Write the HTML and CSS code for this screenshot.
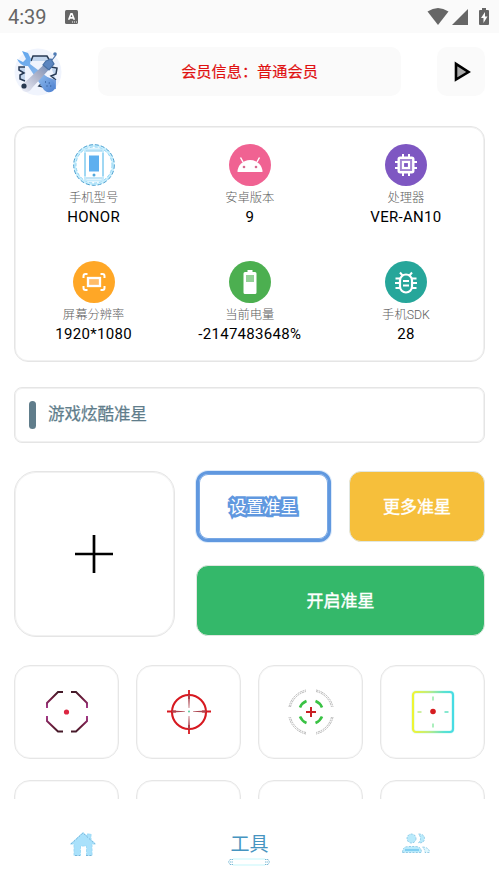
FILE: index.html
```html
<!DOCTYPE html>
<html lang="zh-CN">
<head>
<meta charset="utf-8">
<title>工具</title>
<link rel="stylesheet" href="styles.css">
</head>
<body>
<div class="status">
  <span class="time">4:39</span>
  <svg class="badge" width="13" height="14" viewBox="0 0 13 14"><rect width="13" height="14" rx="1.5" fill="#666"/><path d="M3.7 9.8 6 3.8h1l2.3 6M4.7 7.9h3.6" fill="none" stroke="#fff" stroke-width="1.6"/><path d="M7 12h1m1 0h1m1 0h1" stroke="#fff" stroke-width="1"/></svg>
  <svg class="signals" width="64" height="20" viewBox="0 0 64 20"><g fill="#666"><path d="M.5 4.5Q11 -2.5 21.500 4.500L11 18z"/><path d="M41 2v16H25z"/><path d="M55 3V1h4v2h2q1 0 1 1v13q0 1-1 1h-8q-1 0-1-1V4q0-1 1-1z"/></g><path d="M58 5l-4 6h2.500v5l4-6.500H58z" fill="#fff"/></svg>
</div>
<header class="header">
  <svg class="logo" width="50" height="50" viewBox="0 0 50 50">
    <defs><linearGradient id="handle" x1="0" y1="1" x2="1" y2="0"><stop stop-color="#eef0fa"/><stop offset=".55" stop-color="#a5abc3"/><stop offset="1" stop-color="#547eb8"/></linearGradient>
    <linearGradient id="spanner" x1="0" y1="0" x2="1" y2="1"><stop stop-color="#5ba4ee"/><stop offset=".6" stop-color="#89b6ea"/><stop offset="1" stop-color="#4c7fd0"/></linearGradient></defs>
    <circle cx="25" cy="25" r="23.500" fill="#f0f4fd"/>
    <path d="M12 34l-5-2v-4l4-2-5-3v-3h6M18 14l2-5h14l3 5M38 20l6 1-1 6-5 2 5 4M20 39h-3l2-4M31 40l-5-1 4-4" fill="#c3d6ee" stroke="#283a54" stroke-width="1.500"/>
    <path d="M31 29l12 4v9l-8 1-6-7z" fill="#719bda"/>
    <path d="M9 4l6 2 3 6-1 5 24 18q3 6-1 9-5 3-9-1L15 19q-7 1-11-7l6 3 3-3z" fill="url(#spanner)"/>
    <path d="M37 12l4 5-22 24q-2 4-6 4-6-1-4-7z" fill="url(#handle)"/>
    <path d="M33 14l5-2 3 5-5 6-6-5zM39 13l4-5" fill="#5c86c0" stroke="#4870a5" stroke-width="1.200"/>
    <circle cx="42" cy="7" r="1.800" fill="#4e7bb4"/><circle cx="11" cy="39" r="2.600" fill="#28384f"/>
    <path d="M32 35h.8m3 1h.8m-3 3h.8m3 0h.8" stroke="#29548f" stroke-width="1.500"/>
  </svg>
  <div class="member">会员信息：普通会员</div>
  <div class="play"><svg width="18" height="22" viewBox="0 0 18 22"><path d="M2 3v15.500L14.500 11z" fill="#aaa" stroke="#000" stroke-width="2.600"/></svg></div>
</header>
<main class="content">
  <section class="info">
    <div class="item">
      <svg class="icon" viewBox="0 0 42 42"><circle cx="21" cy="21" r="19.200" fill="none" stroke="#c8effd" stroke-width="2.500"/><circle cx="21" cy="21" r="20.300" fill="none" stroke="#4b9ed0" stroke-dasharray="4 2"/><circle cx="21" cy="21" r="18" fill="none" stroke="#6bc2ee" stroke-width=".7" stroke-dasharray="3 2"/><rect x="12" y="5.500" width="18" height="31" rx="2" fill="#fff" stroke="#c4eafb" stroke-width="2"/><path d="M13 7h16M13 34h16M12 9v23M30 9v23" stroke="#6abde8" stroke-width=".8"/><rect x="16" y="11.500" width="10" height="16" fill="#5eafef"/><circle cx="21" cy="31" r="1.500" fill="#52a8dc"/></svg>
      <span class="label">手机型号</span><span class="value">HONOR</span>
    </div>
    <div class="item">
      <svg class="icon" viewBox="0 0 42 42"><circle cx="21" cy="21" r="21" fill="#f06292"/><path d="M8.500 28a12.500 12 0 0 1 25 0z" fill="#fff"/><path d="M14 18 11.500 13.500M28 18l2.500-4.500" stroke="#fff" stroke-width="1.500"/><circle cx="15" cy="23" r="1.300" fill="#d76b91"/><circle cx="27" cy="23" r="1.300" fill="#d76b91"/></svg>
      <span class="label">安卓版本</span><span class="value">9</span>
    </div>
    <div class="item">
      <svg class="icon" viewBox="0 0 42 42"><circle cx="21" cy="21" r="21" fill="#7e57c2"/><rect x="13.700" y="13.700" width="14.600" height="14.600" rx="1.500" fill="#a386d2" stroke="#fff" stroke-width="2.400"/><path d="M18 10v3m6-3v3m-6 16v3m6-3v3M10 18h3m-3 6h3m16-6h3m-3 6h3" stroke="#fff" stroke-width="2"/><rect x="18" y="18" width="6" height="6" fill="#7e57c2" stroke="#fff" stroke-width="2.200"/></svg>
      <span class="label">处理器</span><span class="value">VER-AN10</span>
    </div>
    <div class="item">
      <svg class="icon" viewBox="0 0 42 42"><circle cx="21" cy="21" r="21" fill="#ffa726"/><path d="M10.500 17v-2q0-2 2-2h2M27.500 13h2q2 0 2 2v2M31.500 25v2q0 2-2 2h-2M14.500 29h-2q-2 0-2-2v-2" fill="none" stroke="#fff" stroke-width="2"/><rect x="15" y="17" width="12" height="8" fill="#ffbc68" stroke="#fff" stroke-width="2.300"/></svg>
      <span class="label">屏幕分辨率</span><span class="value">1920*1080</span>
    </div>
    <div class="item">
      <svg class="icon" viewBox="0 0 42 42"><circle cx="21" cy="21" r="21" fill="#4caf50"/><path d="M18.500 11V9h5v2H26q1.500 0 1.500 1.500v19Q27.500 33 26 33H16q-1.500 0-1.500-1.500v-19Q14.500 11 16 11z" fill="#fff"/><path d="M17 14h8v7h-8z" fill="#94d197"/></svg>
      <span class="label">当前电量</span><span class="value">-2147483648%</span>
    </div>
    <div class="item">
      <svg class="icon" viewBox="0 0 42 42"><circle cx="21" cy="21" r="21" fill="#26a69a"/><rect x="15" y="13.500" width="12" height="18" rx="6" fill="none" stroke="#fff" stroke-width="2.200"/><path d="M17.500 14.500l-2.500-3m9.500 3 2.500-3M10.500 17.500H15M10 22h5m-4.500 5H15M27 17.500h4.500M27 22h5m-5 5h4.500M18 20h6m-6 4.500h6" stroke="#fff" stroke-width="2"/></svg>
      <span class="label">手机SDK</span><span class="value">28</span>
    </div>
  </section>
  <h2 class="section-title">游戏炫酷准星</h2>
  <section class="controls">
    <div class="add"><svg width="40" height="40" viewBox="0 0 40 40"><path d="M20 1v38M1 20h38" stroke="#000" stroke-width="2.700"/></svg></div>
    <div class="buttons">
      <button class="set">设置准星</button>
      <button class="more">更多准星</button>
      <button class="start">开启准星</button>
    </div>
  </section>
  <section class="sights">
    <div class="sight"><svg width="44" height="44" viewBox="0 0 44 44"><defs><linearGradient id="oct" gradientUnits="userSpaceOnUse" x1="0" y1="2" x2="0" y2="42"><stop stop-color="#431a28"/><stop offset=".15" stop-color="#6b1c3a"/><stop offset=".5" stop-color="#b83aa5"/><stop offset=".85" stop-color="#6b1c3a"/><stop offset="1" stop-color="#431a28"/></linearGradient></defs><path d="M18 2h-5L2 13v5M26 2h5L42 13v5M18 41.500h-5L2 31v-5M26 41.500h5L42 31v-5" fill="none" stroke="url(#oct)" stroke-width="1.900"/><circle cx="21.500" cy="22" r="2.600" fill="#dc2642"/></svg></div>
    <div class="sight"><svg width="44" height="44" viewBox="0 0 44 44"><circle cx="22" cy="22" r="17" fill="none" stroke="#d71920" stroke-width="2.100"/><path d="M22 0v9M22 35v9M0 21.500h9M35 21.500h9" stroke="#d71920" stroke-width="1.800"/><path d="M21 5h2l-.7 13h-.6zM21 39h2l-.7-13h-.6zM5 20.500v2l13-.7v-.6zM39 20.500v2l-13-.7v-.6z" fill="#ac4650"/><circle cx="22" cy="21.500" r="1" fill="#57cf9a"/></svg></div>
    <div class="sight"><svg width="46" height="46" viewBox="0 0 46 46"><g fill="none"><g stroke="#999" stroke-width=".7" stroke-dasharray="2 .7"><path d="M1 18A22 22 0 0 1 18 1M28 1a22 22 0 0 1 17 17M45 28a22 22 0 0 1-17 17M18 45A22 22 0 0 1 1 28"/><path d="M2.500 18A20.500 20.500 0 0 1 18 2.500M28 2.500A20.500 20.500 0 0 1 43.500 18M43.500 28A20.500 20.500 0 0 1 28 43.500M18 43.500A20.500 20.500 0 0 1 2.500 28"/></g><path d="M12 18.500a12 12 0 0 1 6.500-6.500M27.500 12a12 12 0 0 1 6.500 6.500M34 27.500a12 12 0 0 1-6.500 6.500M18.500 34a12 12 0 0 1-6.500-6.500" stroke="#39c244" stroke-width="2.600"/><path d="M23 18v10M18 23h10" stroke="#c92025" stroke-width="2"/></g></svg></div>
    <div class="sight"><svg width="46" height="46" viewBox="0 0 46 46"><defs><linearGradient id="square" gradientUnits="userSpaceOnUse" x1="2" y1="0" x2="44" y2="0"><stop stop-color="#f1f52f"/><stop offset=".4" stop-color="#c0ec80"/><stop offset=".75" stop-color="#5ce2d0"/><stop offset="1" stop-color="#45dbe6"/></linearGradient></defs><rect x="3" y="3" width="40" height="40" rx="3" fill="none" stroke="#e3fbf4" stroke-width="3.600"/><rect x="3" y="3" width="40" height="40" rx="3" fill="none" stroke="url(#square)" stroke-width="2.100"/><path d="M23 7.500v4M23 34.500v4" stroke="#9dedb2" stroke-width="1.700"/><path d="M7.500 23h4" stroke="#c5ec90" stroke-width="1.700"/><path d="M34.500 23h4" stroke="#72e4c8" stroke-width="1.700"/><circle cx="23" cy="22.500" r="2.800" fill="#d51c20"/></svg></div>
    <div class="sight"></div><div class="sight"></div><div class="sight"></div><div class="sight"></div>
  </section>
</main>
<nav class="nav">
  <div class="tab"><svg width="28" height="28" viewBox="0 0 28 28"><path d="M1.500 14 14 2.500l4 3.500V4h4v5.500l4.500 4.500H23v11.500h-5.500V16h-6v9.500H5V14z" fill="#a9e1fb" stroke="#9ad8f5" stroke-width=".9" stroke-dasharray="3 1"/><path d="M2 14 14 3l12 11M6 25.500h5m6 0h6" fill="none" stroke="#6eabd0" stroke-width=".8" stroke-dasharray="2 1.500"/></svg></div>
  <div class="tab active"><span>工具</span><svg width="42" height="8" viewBox="0 0 42 8"><path d="M5 1h32M5 7h32" stroke="#d9fafd" stroke-width="1.500"/><path d="M5 1.500H2L.5 4 2 6.500h3M2 4h3M37 1.500h3L41.500 4 40 6.500h-3M37 4h3" fill="none" stroke="#79b9d5" stroke-dasharray="1.500 .6"/></svg></div>
  <div class="tab"><svg width="30" height="24" viewBox="0 0 30 24"><g fill="#b9eafb" stroke="#7fc0e0" stroke-width=".8" stroke-dasharray="2 1.300"><circle cx="10.500" cy="6.500" r="4.500"/><path d="M17.500 2q6 0 6 4.500t-6 4.500q4-4.500 0-9zM1.500 20.500q0-6 6-6h7q6 0 6 6z"/><path d="M21.500 15q7 .5 7 5.500h-4.500q0-3-2.500-5.500z" fill="#ddf7fe"/></g><path d="M4 18h14" stroke="#6fc6ef" stroke-width="1.500"/></svg></div>
</nav>
</body>
</html>
```
FILE: styles.css
```css
* { box-sizing: border-box; }
body {
  margin: 0;
  height: 888px;
  overflow: hidden;
  display: flex;
  flex-direction: column;
  background: #fff;
  font-family: Roboto, "Noto Sans CJK SC", sans-serif;
}
svg { display: block; flex: none; }
.status {
  flex: none;
  height: 33px;
  padding: 0 8px;
  display: flex;
  align-items: center;
  background: #fafafa;
  color: #666;
}
.time { width: 57px; font-size: 20px; line-height: 35px; padding-top: 1px; }
.signals { margin-left: auto; }
.header {
  flex: none;
  height: 93px;
  padding: 14px 14px 0 13px;
  display: flex;
  align-items: flex-start;
}
.member {
  width: 303px;
  height: 49px;
  margin-left: 35px;
  border-radius: 10px;
  background: #fafafa;
  color: #e01010;
  font-size: 15.2px;
  line-height: 51px;
  text-align: center;
  -webkit-text-stroke: .2px #e01010;
}
.play {
  width: 48px;
  height: 49px;
  margin-left: auto;
  padding-left: 3px;
  display: flex;
  align-items: center;
  justify-content: center;
  border-radius: 10px;
  background: #fafafa;
}
.content { height: 673px; flex: none; overflow: hidden; padding: 0 14px; }
.info, .section-title, .add {
  border: 1px solid #e5e5e5;
  box-shadow: inset 0 0 0 1px #f1f1f1;
}
.info {
  height: 236px;
  padding: 17px 0 0 .5px;
  display: grid;
  grid-template-columns: repeat(3, 156.2px);
  grid-template-rows: 117px 100px;
  border-radius: 14px;
}
.item { display: flex; flex-direction: column; align-items: center; }
.icon { width: 42px; height: 42px; }
.label { margin-top: 1px; color: #606060; font-size: 12.3px; font-weight: 300; line-height: 22px; }
.value { color: #000; font-size: 15px; letter-spacing: .3px; line-height: 17px; }
.section-title {
  height: 56px;
  margin: 25px 0 28px;
  padding-left: 14px;
  display: flex;
  align-items: center;
  border-radius: 8px;
  color: #607d8b;
  font-size: 16.5px;
  font-weight: 400;
  line-height: 56px;
  -webkit-text-stroke: .25px #607d8b;
}
.section-title::before {
  content: "";
  width: 7px;
  height: 28px;
  margin-right: 12px;
  border-radius: 4px;
  background: #607d8b;
}
.controls {
  height: 166px;
  display: flex;
  justify-content: space-between;
}
.add {
  width: 161px;
  padding: 0 1px 1px 0;
  display: flex;
  align-items: center;
  justify-content: center;
  border-radius: 22px;
}
.buttons {
  width: 289px;
  display: grid;
  grid-template-columns: 135px 136px;
  grid-template-rows: 71px 71px;
  column-gap: 18px;
  row-gap: 23px;
}
button {
  margin: 0;
  padding: 0 0 2px;
  border: 1px solid #e1e7e1;
  border-radius: 12px;
  color: #fff;
  font-family: inherit;
  font-size: 17px;
  -webkit-text-stroke: .4px #fff;
}
.set {
  border: 3px solid #6098df;
  background: #fff;
  box-shadow: inset 0 0 0 1px #78a8e5, 0 0 0 1px #dceafa;
  -webkit-text-stroke: 5px #6098df;
  paint-order: stroke fill;
}
.more { background: #f6bf3b; }
.start { grid-column: span 2; background: #34b86a; }
.sights {
  margin-top: 28px;
  display: grid;
  grid-template-columns: repeat(4, 105px);
  grid-auto-rows: 94px;
  gap: 21px 17px;
}
.sight {
  display: flex;
  align-items: center;
  justify-content: center;
  border: 1px solid #e6e6e6;
  box-shadow: inset 0 0 0 1px #f7f7f7;
  border-radius: 16px;
}
.nav {
  height: 89px;
  flex: none;
  display: grid;
  grid-template-columns: repeat(3, 1fr);
}
.tab { display: flex; flex-direction: column; align-items: center; justify-content: center; }
.active { padding-top: 11px; color: #4694c0; font-size: 19px; line-height: 26px; }
```
